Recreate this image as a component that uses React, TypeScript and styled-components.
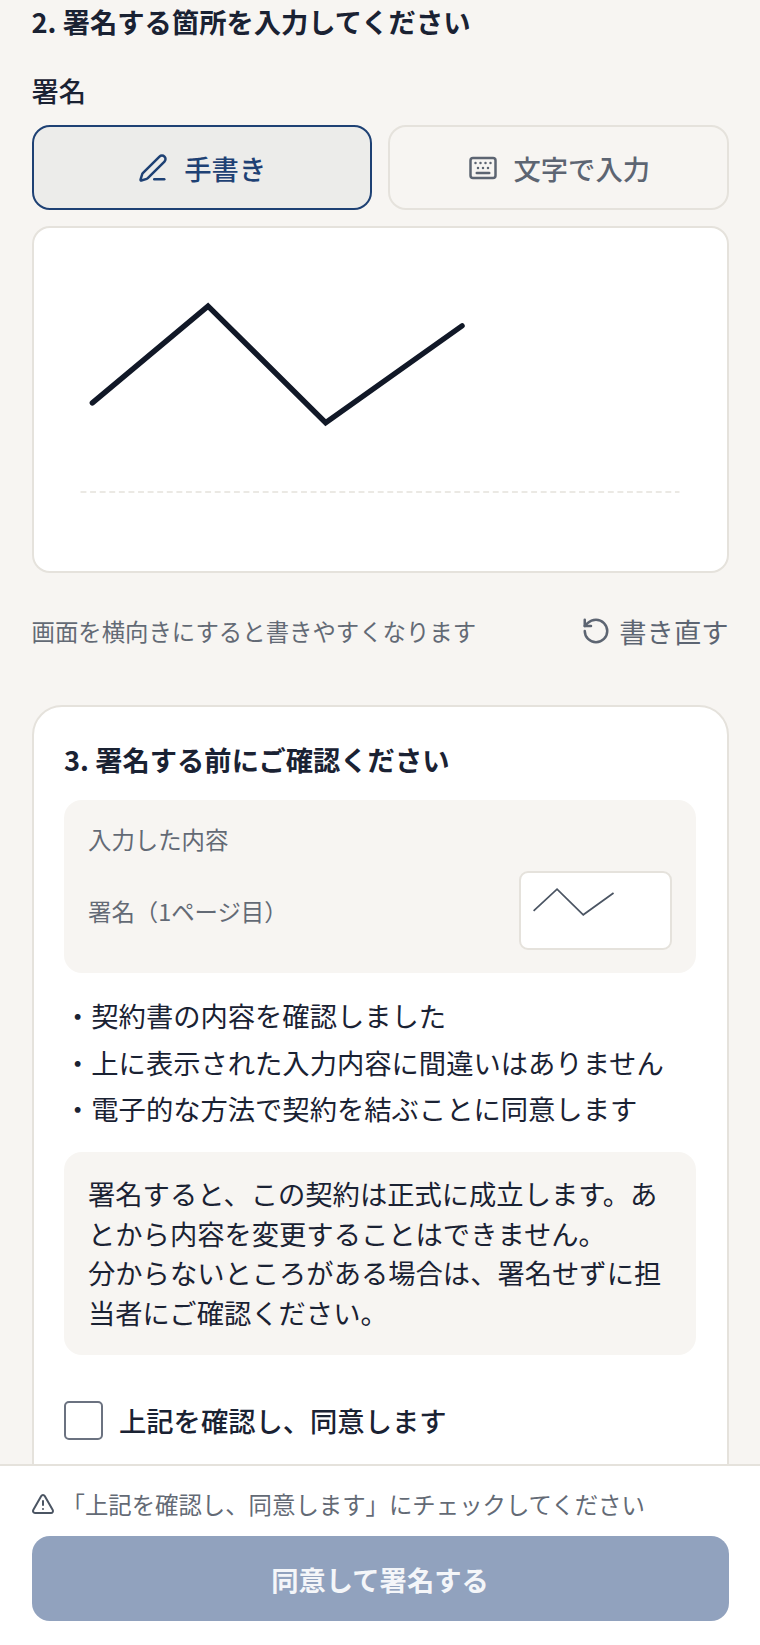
import styled, { createGlobalStyle } from 'styled-components'
import { Keyboard, PenLine, RotateCcw, TriangleAlert } from 'lucide-react'

const GlobalStyle = createGlobalStyle`
	html, body {
		margin: 0;
		padding: 0;
		background: #f7f5f2;
	}
	body {
		font-family: 'Noto Sans CJK JP', 'Noto Sans', sans-serif;
		color: #111827;
	}
`

const checks = ['契約書の内容を確認しました', '上に表示された入力内容に間違いはありません', '電子的な方法で契約を結ぶことに同意します']

const App = () => {
	return (
		<Page>
			<GlobalStyle />
			<Main>
				<SectionTitle>2. 署名する箇所を入力してください</SectionTitle>
				<FieldLabel>署名</FieldLabel>
				<ModeTabs>
					<ModeTab $active>
						<PenLine size={30} strokeWidth={2} />
						手書き
					</ModeTab>
					<ModeTab>
						<Keyboard size={30} strokeWidth={2} />
						文字で入力
					</ModeTab>
				</ModeTabs>
				<SignaturePad>
					<SignatureDrawing viewBox='0 0 696 345'>
						<polyline points='57,177 174,79 293,197 431,99' fill='none' stroke='#111827' strokeWidth='5.5' strokeLinecap='round' strokeLinejoin='miter' />
						<line x1='45' y1='267' x2='651' y2='267' stroke='#e5e2dc' strokeWidth='1.5' strokeDasharray='6 3.7' />
					</SignatureDrawing>
				</SignaturePad>
				<HintRow>
					<Hint>画面を横向きにすると書きやすくなります</Hint>
					<RedoButton>
						<RotateCcw size={30} strokeWidth={2} />
						書き直す
					</RedoButton>
				</HintRow>
				<ConfirmCard>
					<CardTitle>3. 署名する前にご確認ください</CardTitle>
					<EnteredBox>
						<EnteredCaption>入力した内容</EnteredCaption>
						<EnteredRow>
							<EnteredName>署名（1ページ目）</EnteredName>
							<Thumbnail>
								<ThumbnailDrawing viewBox='0 0 153 79'>
									<polyline points='11.3,40 36,17 63.6,44 95.5,21' fill='none' stroke='#4b5563' strokeWidth='1.8' />
								</ThumbnailDrawing>
							</Thumbnail>
						</EnteredRow>
					</EnteredBox>
					<CheckList>
						{checks.map(check => (
							<CheckItem key={check}>・{check}</CheckItem>
						))}
					</CheckList>
					<Notice>
						署名すると、この契約は正式に成立します。あとから内容を変更することはできません。
						<br />
						分からないところがある場合は、署名せずに担当者にご確認ください。
					</Notice>
					<AgreeRow>
						<AgreeBox />
						上記を確認し、同意します
					</AgreeRow>
				</ConfirmCard>
			</Main>
			<Footer>
				<Warning>
					<TriangleAlert size={24} strokeWidth={2} />
					「上記を確認し、同意します」にチェックしてください
				</Warning>
				<SubmitButton type='button' disabled>
					同意して署名する
				</SubmitButton>
			</Footer>
		</Page>
	)
}

export default App

const Page = styled.div`
	position: relative;
	width: 760px;
	height: 1645px;
	overflow: hidden;
	background: #f7f5f2;
`

const Main = styled.main`
	display: flex;
	flex-direction: column;
	padding: 0 31.5px;
`

const SectionTitle = styled.h2`
	margin: 0;
	font-size: 27.3px;
	font-weight: 700;
	line-height: 42px;
	color: #1a2233;
`

const FieldLabel = styled.div`
	margin-top: 28px;
	font-size: 27.3px;
	font-weight: 500;
	line-height: 40px;
	color: #1a2233;
`

const ModeTabs = styled.div`
	display: grid;
	grid-template-columns: 1fr 1fr;
	gap: 16px;
	margin-top: 15px;
`

const ModeTab = styled.button<{ $active?: boolean }>`
	display: flex;
	align-items: center;
	justify-content: center;
	gap: 16px;
	height: 85px;
	padding: 0 0 0 1px;
	font-family: inherit;
	font-size: 27.3px;
	font-weight: 500;
	color: ${({ $active }) => ($active ? '#1e4174' : '#5d6572')};
	background: ${({ $active }) => ($active ? '#ececea' : 'transparent')};
	border: 2px solid ${({ $active }) => ($active ? '#1e4174' : '#e5e2dc')};
	border-radius: 18px;
`

const SignaturePad = styled.div`
	margin-top: 16px;
	height: 346.5px;
	box-sizing: border-box;
	background: #fff;
	border: 2px solid #e5e2dc;
	border-radius: 18px;
	overflow: hidden;
`

const SignatureDrawing = styled.svg`
	display: block;
	width: 692px;
	height: 341px;
`

const HintRow = styled.div`
	display: flex;
	align-items: center;
	justify-content: space-between;
	margin-top: 38.5px;
`

const Hint = styled.span`
	font-size: 23.4px;
	line-height: 40px;
	color: #636a75;
`

const RedoButton = styled.button`
	display: flex;
	align-items: center;
	gap: 8px;
	padding: 0;
	font-family: inherit;
	font-size: 27.3px;
	line-height: 40px;
	color: #5d6572;
	background: none;
	border: 0;
`

const ConfirmCard = styled.section`
	margin-top: 54px;
	height: 800px;
	flex: none;
	box-sizing: border-box;
	padding: 32px 30.5px;
	background: #fff;
	border: 2px solid #e5e2dc;
	border-radius: 30px;
`

const CardTitle = styled.h3`
	margin: 0;
	font-size: 27.3px;
	font-weight: 700;
	line-height: 40px;
	color: #1a2233;
`

const EnteredBox = styled.div`
	margin-top: 21px;
	padding: 22px 24px 23px;
	background: #f7f5f2;
	border-radius: 18px;
`

const EnteredCaption = styled.div`
	font-size: 23.4px;
	line-height: 34px;
	color: #636a75;
`

const EnteredRow = styled.div`
	display: flex;
	align-items: center;
	justify-content: space-between;
	margin-top: 15px;
`

const EnteredName = styled.span`
	font-size: 23.4px;
	line-height: 34px;
	color: #636a75;
`

const Thumbnail = styled.div`
	width: 153px;
	height: 79px;
	box-sizing: border-box;
	background: #fff;
	border: 2px solid #e5e2dc;
	border-radius: 9px;
	overflow: hidden;
`

const ThumbnailDrawing = styled.svg`
	display: block;
	width: 149px;
	height: 75px;
`

const CheckList = styled.ul`
	display: flex;
	flex-direction: column;
	gap: 6px;
	margin: 22px 0 0;
	padding: 0;
	list-style: none;
`

const CheckItem = styled.li`
	font-size: 27.3px;
	line-height: 40.5px;
	color: #1a2233;
`

const Notice = styled.div`
	margin-top: 23px;
	padding: 22.5px 24px;
	font-size: 27.3px;
	line-height: 39.5px;
	color: #1a2233;
	background: #f7f5f2;
	border-radius: 18px;
`

const AgreeRow = styled.label`
	display: flex;
	align-items: center;
	gap: 16px;
	margin-top: 46px;
	font-size: 27.3px;
	font-weight: 500;
	line-height: 39px;
	color: #1a2233;
`

const AgreeBox = styled.span`
	width: 39px;
	height: 39px;
	box-sizing: border-box;
	background: #fff;
	border: 2px solid #6b7280;
	border-radius: 5px;
`

const Footer = styled.footer`
	position: absolute;
	left: 0;
	right: 0;
	bottom: 0;
	height: 181px;
	box-sizing: border-box;
	padding: 21px 31.5px 0;
	background: #fff;
	border-top: 2px solid #e5e2dc;
`

const Warning = styled.div`
	display: flex;
	align-items: center;
	gap: 7px;
	font-size: 23.4px;
	line-height: 34px;
	color: #636a75;
	svg {
		color: #4b5563;
		margin-left: -1px;
	}
`

const SubmitButton = styled.button`
	display: block;
	width: 100%;
	height: 85px;
	margin-top: 15px;
	padding: 0;
	font-family: inherit;
	font-size: 27.3px;
	font-weight: 700;
	color: #f4f6f9;
	background: #91a2be;
	border: 0;
	border-radius: 18px;
`
